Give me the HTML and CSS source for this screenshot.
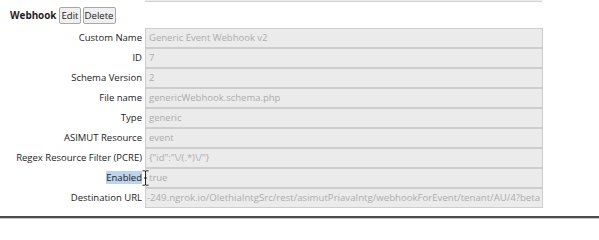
FILE: index.html
```html
<!DOCTYPE html>
<html>
<head>
<meta charset="utf-8">
<link rel="stylesheet" href="styles.css">
</head>
<body>
<div class="page">
  <div class="prev-edge"></div>
  <div class="header">
    <span class="title">Webhook</span>
    <button class="btn">Edit</button>
    <button class="btn">Delete</button>
  </div>
  <div class="form">
    <div class="label">Custom Name</div><div class="field">Generic Event Webhook v2</div>
    <div class="label">ID</div><div class="field">7</div>
    <div class="label">Schema Version</div><div class="field">2</div>
    <div class="label">File name</div><div class="field">genericWebhook.schema.php</div>
    <div class="label">Type</div><div class="field">generic</div>
    <div class="label">ASIMUT Resource</div><div class="field">event</div>
    <div class="label">Regex Resource Filter (PCRE)</div><div class="field">{"id":"\/(.*)\/"}</div>
    <div class="label"><span class="sel">Enabled</span></div><div class="field">true</div>
    <div class="label">Destination URL</div><div class="field url">-249.ngrok.io/OlethiaIntgSrc/rest/asimutPriavaIntg/webhookForEvent/tenant/AU/4?beta</div>
  </div>
  <div class="rule"></div>
  <svg class="cursor" width="7" height="16" viewBox="0 0 7 16">
    <path d="M0.5 0.8 H2.5 Q3.5 0.8 3.5 2 V14 Q3.5 15.2 2.5 15.2 H0.5 M6.5 0.8 H4.5 Q3.5 0.8 3.5 2 M3.5 14 Q3.5 15.2 4.5 15.2 H6.5 M2 8 H5" fill="none" stroke="#222" stroke-width="1"/>
  </svg>
</div>
</body>
</html>
```
FILE: styles.css
```css
html, body {
  margin: 0;
  padding: 0;
  background: #ffffff;
}
.page {
  position: relative;
  width: 599px;
  height: 219px;
  overflow: hidden;
  font-family: "Open Sans", "Noto Sans", sans-serif;
  font-size: 9.6px;
  color: #333333;
}
.prev-edge {
  margin-left: 145px;
  width: 397px;
  height: 1px;
  background: #ebebeb;
  border-bottom: 1px solid #d2d2d2;
}
.header {
  display: flex;
  align-items: center;
  gap: 2px;
  padding-left: 10px;
  margin-top: 4px;
  height: 18px;
}
.title {
  font-weight: 700;
  font-size: 9.9px;
  margin-right: 1px;
  color: #1e1e1e;
}
.btn {
  font-family: "Open Sans", "Noto Sans", sans-serif;
  font-size: 9.6px;
  line-height: 15px;
  height: 17px;
  padding: 0 1px;
  margin: 0;
  border: 1px solid #a8a8a8;
  border-radius: 2px;
  background: #f0f0f0;
  color: #222;
}
.form {
  display: grid;
  grid-template-columns: 142px 398px;
  column-gap: 3px;
  margin-top: 4px;
}
.label {
  height: 20px;
  line-height: 20px;
  text-align: right;
  white-space: nowrap;
  color: #1c1c1c;
  font-size: 9.5px;
}
.sel {
  background: #bdd3ee;
}
.field {
  box-sizing: border-box;
  height: 20px;
  line-height: 18px;
  border: 1px solid #cdcdcd;
  background: #ebebeb;
  color: #ababab;
  padding: 0 3px;
  font-size: 9.5px;
  white-space: nowrap;
  overflow: hidden;
}
.field.url {
  padding: 0 1px;
  font-size: 9.65px;
}
.rule {
  margin-top: 8px;
  height: 2px;
  background: #4d4d4d;
  border-bottom: 1px solid #c9c9c9;
}
.cursor {
  position: absolute;
  left: 142px;
  top: 170px;
}
```
